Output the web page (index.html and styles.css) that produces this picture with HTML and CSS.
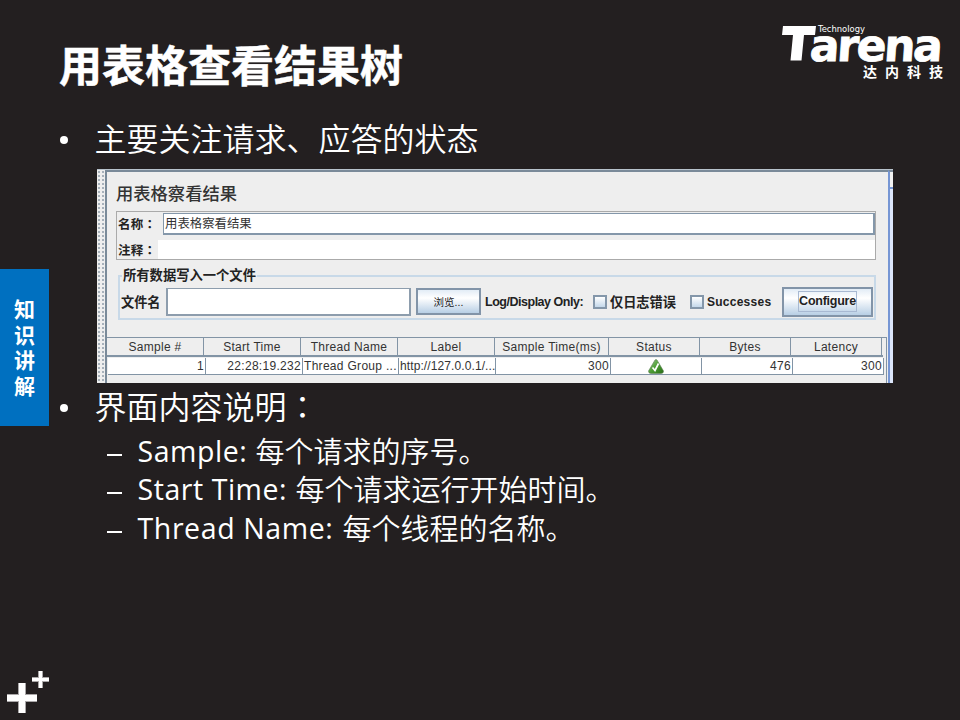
FILE: index.html
```
<!DOCTYPE html>
<html lang="zh-CN">
<head>
<meta charset="utf-8">
<title>用表格查看结果树</title>
<link rel="stylesheet" href="styles.css">
</head>
<body>
<aside class="rail">
  <div class="tab"><span>知</span><span>识</span><span>讲</span><span>解</span></div>
  <svg class="pluses" width="44" height="44" viewBox="0 0 44 44">
    <path fill="#aaa7a8" d="M11 12h8v30h-8zM0 23h30v8H0zM31 0h5v17h-5zM25 6h17v5H25z"/>
    <path fill="#fff" d="M12 12h6v30h-6zM0 24h30v6H0zM32 0h3v17h-3zM25 7h17v3H25z"/>
  </svg>
</aside>
<main class="slide">
  <header class="head">
    <h1>用表格查看结果树</h1>
    <svg class="logo" width="180" height="65" viewBox="0 0 180 65">
      <g fill="#fff" font-family="'DejaVu Sans',sans-serif">
        <path d="M3 6H36L35 15H24L21.500 40.500H10.500L13 15H2Z"/>
        <g transform="translate(29 40.500) skewX(-4)"><text font-size="44" font-weight="700" textLength="133" lengthAdjust="spacing" x="0" y="0" stroke="#fff" stroke-width=".8">arena</text></g>
        <text x="38" y="12.300" font-size="8.500" textLength="47" lengthAdjust="spacingAndGlyphs">Technology</text>
        <text x="83" y="57" font-size="14" font-weight="700" font-family="'Noto Sans CJK SC',sans-serif" letter-spacing="8">达内科技</text>
      </g>
    </svg>
  </header>
  <p class="bullet first"><i class="dot"></i><span>主要关注请求、应答的状态</span></p>
  <section class="shot">
    <div class="grip"></div>
    <div class="pane">
      <h2>用表格察看结果</h2>
      <div class="names">
        <div class="nrow"><b>名称<span class="colon" lang="zh-TW">：</span></b><div class="field">用表格察看结果</div></div>
        <div class="nrow second"><b>注释<span class="colon" lang="zh-TW">：</span></b><div class="blank"></div></div>
      </div>
      <div class="files">
        <b class="legend">所有数据写入一个文件</b>
        <b class="fname">文件名</b>
        <div class="path"></div>
        <div class="btn browse">浏览...</div>
        <b class="only">Log/Display Only:</b>
        <i class="box"></i><b class="err">仅日志错误</b>
        <i class="box"></i><b class="succ">Successes</b>
        <div class="btn conf"><span>Configure</span></div>
      </div>
      <div class="table">
        <div class="row th"><div>Sample #</div><div>Start Time</div><div>Thread Name</div><div>Label</div><div>Sample Time(ms)</div><div>Status</div><div>Bytes</div><div>Latency</div></div>
        <div class="row td"><div>1</div><div>22:28:19.232</div><div class="l">Thread Group ...</div><div class="l url">http://127.0.0.1/...</div><div>300</div><div class="c"><svg width="16" height="15" viewBox="0 0 16 15"><defs><linearGradient id="g" x2="1" y2="1"><stop offset="0" stop-color="#9ac98b"/><stop offset=".5" stop-color="#4d9e35"/><stop offset="1" stop-color="#256b14"/></linearGradient></defs><path d="M7 1Q8 0 9 1L15.500 12Q15.500 14.500 13 14.500H3Q.5 14.500.5 12Z" fill="url(#g)" stroke="#5c7d55" stroke-width=".6"/><path d="M4.500 8.500L7 11.500L10.500 4.500" fill="none" stroke="#fff" stroke-width="1.700"/></svg></div><div>476</div><div>300</div></div>
      </div>
    </div>
    <div class="edge"><i></i></div>
  </section>
  <p class="bullet second-b"><i class="dot"></i><span>界面内容说明<span class="colon" lang="zh-TW">：</span></span></p>
  <ul>
    <li><i></i><span class="en e1">Sample:</span><span class="zh">每个请求的序号。</span></li>
    <li><i></i><span class="en e2">Start Time:</span><span class="zh">每个请求运行开始时间。</span></li>
    <li><i></i><span class="en e3">Thread Name:</span><span class="zh">每个线程的名称。</span></li>
  </ul>
</main>
</body>
</html>
```
FILE: styles.css
```
* { box-sizing: border-box; }
body { margin: 0; width: 960px; height: 720px; overflow: hidden; background: #231f20; color: #fff; display: grid; grid-template-columns: 49px 1fr; font-family: "Noto Sans", "Noto Sans CJK SC", sans-serif; }
h1, h2, p, ul { margin: 0; padding: 0; }
.rail { display: flex; flex-direction: column; justify-content: space-between; padding: 269px 0 5px; height: 720px; }
.tab { width: 49px; height: 157px; background: #0070c0; display: flex; flex-direction: column; align-items: center; padding-top: 27px; font: 700 21px/25.5px "Noto Sans CJK SC", sans-serif; }
.pluses { margin-left: 7px; flex: none; }
.slide { display: flex; flex-direction: column; padding-left: 11px; min-width: 0; }
.head { display: flex; justify-content: space-between; height: 115px; padding: 20px 0 0 0; }
h1 { font: 700 43px/64px "Noto Sans CJK SC", sans-serif; margin: 11px 0 0 -1px; white-space: nowrap; -webkit-text-stroke: .5px #fff; }
.logo { flex: none; }
.bullet { display: flex; align-items: center; height: 50px; font: 350 32px/44px "Noto Sans CJK SC", sans-serif; white-space: nowrap; }
.bullet > span { height: 50px; }
.first { margin-bottom: 4px; }
.dot { width: 8px; height: 8px; border-radius: 50%; background: #fff; margin: 0 26.500px 0 0; }
.colon { font-family: "Noto Sans CJK TC", sans-serif; }
.shot { width: 796px; height: 214px; margin-left: 37px; background: #eee; display: flex; color: #222; border-top: 1px solid #b8c3cc; font-family: "Liberation Sans", "Noto Sans CJK SC", sans-serif; flex: none; overflow: hidden; }
.grip { width: 8px; background: #eee radial-gradient(circle, #a5afb9 .7px, transparent 1px) 0 0 / 4px 4px; }
.pane { width: 783px; border: 2px solid #7a8a99; border-width: 2px 0 0 2px; display: flex; flex-direction: column; white-space: nowrap; }
.edge { width: 5px; border-top: 2px solid #7a8a99; border-left: 2px solid #7696d4; background: #dce6fa; }
.edge i { display: block; height: 17px; background: #f2f2f2; border-bottom: 2px solid #7696d4; }
h2 { font: 500 17.300px/26px "Noto Sans CJK SC", sans-serif; margin: 8px 0 1px 9px; height: 30px; color: #333; }
.names { margin-left: 9px; width: 760px; height: 49px; border: 1px solid #aaa; padding: 1px 0 0 1px; }
.nrow { display: flex; height: 22px; font-size: 12.500px; line-height: 22px; }
.nrow b { width: 45px; letter-spacing: .2px; }
.field { width: 712px; border: 1px solid #8497aa; border-width: 1px 2px 2px 1px; background: #fff; font-size: 12.400px; line-height: 20px; padding-left: 1px; color: #333; }
.second { margin-top: 5px; height: 19px; line-height: 19px; }
.nrow.second b { width: 40px; }
.blank { flex: 1; background: #fff; }
.files { position: relative; margin: 15px 0 0 11px; width: 758px; height: 45px; border: 2px solid #c8d9e8; display: flex; align-items: center; font-size: 13px; padding: 8px 0 0 1px; }
.legend { position: absolute; left: 2px; top: -10px; line-height: 18px; background: #eee; padding: 0 1px; font-size: 13.300px; }
.fname { width: 45px; font-size: 13.200px; }
.path { width: 245px; height: 28px; border: 2px solid #8d9dad; border-top-width: 1px; background: #fff; }
.btn { border: 2px solid #8294a8; background: linear-gradient(#e2ecf6, #fff 35%, #b8cfe5); display: flex; align-items: center; justify-content: center; }
.browse { width: 65px; height: 27px; margin-left: 5px; font-size: 10.500px; }
.only { margin-left: 4px; width: 108px; font-size: 12.500px; letter-spacing: -.48px; }
.box { width: 14px; height: 14px; border: 2px solid #8497aa; background: linear-gradient(#fff, #c4d8ea); flex: none; }
.err { margin-left: 3px; width: 80px; font-size: 13.200px; }
.succ { margin-left: 3px; width: 75px; font-size: 12px; letter-spacing: .25px; }
.conf { width: 91px; height: 30px; font-weight: 700; font-size: 12.500px; letter-spacing: -.25px; }
.conf span { border: 1px solid #a8b9d2; line-height: 19px; }
.table { width: 780px; height: 46px; margin-top: 17px; border-top: 1px solid #8294a5; border-right: 1px solid #8294a5; font-size: 12px; color: #333; }
.row { display: grid; letter-spacing: .3px; }
.th { grid-template-columns: 97px 97px 97px 97px 114px 91px 91px 91px; height: 19px; line-height: 19px; text-align: center; border-bottom: 2px solid #8294a5; width: 776px; }
.th div { border-right: 1px solid #8294a5; }
.td { grid-template-columns: 98px 97px 96px 97px 115px 91px 91px 91px; height: 18px; line-height: 16px; text-align: right; background: #fff; border-bottom: 1px solid #8294a5; border-top: 1px solid #eee; margin-left: 1px; width: 776px; }
.td div { border-right: 1px solid #8294a5; padding-right: 1px; overflow: hidden; }
.td .l { text-align: left; padding-left: 1px; }
.td .url { letter-spacing: .1px; }
.td .c { display: flex; justify-content: center; padding-top: 1px; }
.second-b { height: 49px; }
li { list-style: none; display: flex; align-items: center; height: 38.500px; margin-left: 47px; font: 350 29px/38px "Noto Sans CJK SC", sans-serif; white-space: nowrap; }
li i { width: 15px; height: 2px; background: #fff; margin: 7px 15.500px 0 0; }
.zh { padding-bottom: 3px; }
.en { font-family: "Open Sans", sans-serif; font-weight: 400; font-size: 28.500px; letter-spacing: .55px; padding-bottom: 1px; }
.e1 { width: 118px; }
.e2 { width: 158px; }
.e3 { width: 205px; letter-spacing: .6px; }
```
